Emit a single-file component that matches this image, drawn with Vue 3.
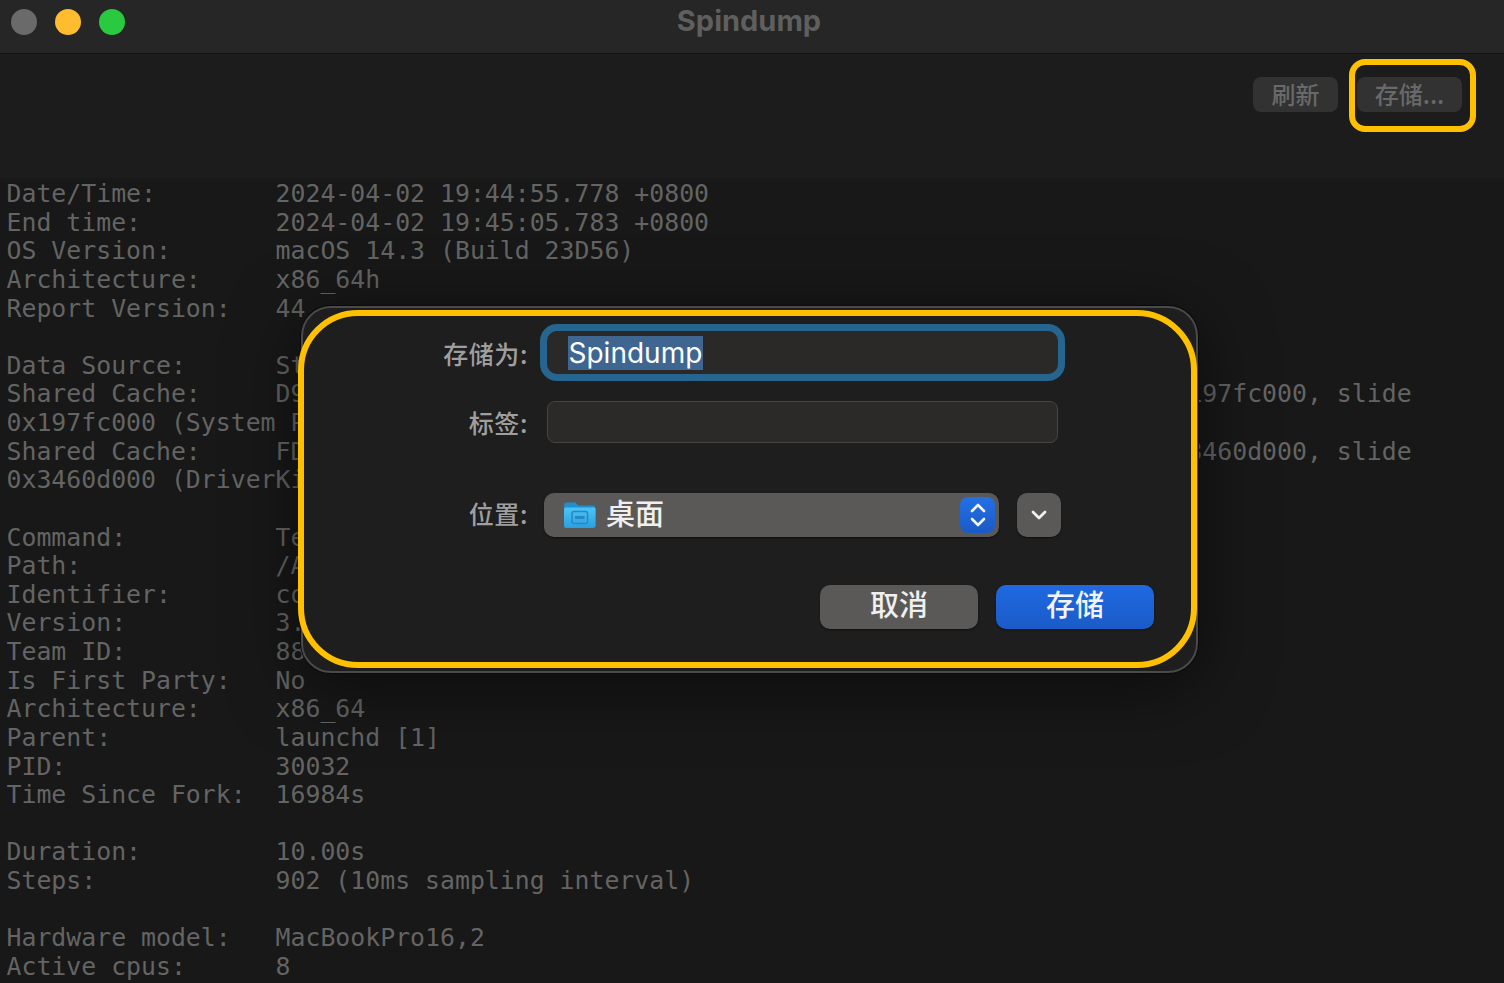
<script setup>
const log = `Date/Time:        2024-04-02 19:44:55.778 +0800
End time:         2024-04-02 19:45:05.783 +0800
OS Version:       macOS 14.3 (Build 23D56)
Architecture:     x86_64h
Report Version:   44

Data Source:      Stackshots
Shared Cache:     D9B5CCCE-E8C6-3D6F-9E4B-1B1E3B1E5C4A slide base address 0x7f8197fc000, slide
0x197fc000 (System Primary)
Shared Cache:     FD2A1C07-6B3E-3F19-A4D2-7C0E8B5D9A16 slide base address 0x7ff3460d000, slide
0x3460d000 (DriverKit)

Command:          Terminal
Path:             /Applications/Utilities/Terminal.app/Contents/MacOS/Terminal
Identifier:       com.apple.Terminal
Version:          3.14
Team ID:          88
Is First Party:   No
Architecture:     x86_64
Parent:           launchd [1]
PID:              30032
Time Since Fork:  16984s

Duration:         10.00s
Steps:            902 (10ms sampling interval)

Hardware model:   MacBookPro16,2
Active cpus:      8`
</script>

<template>
  <div class="window">
    <header class="titlebar">
      <div class="lights">
        <span class="light gray"></span>
        <span class="light yellow"></span>
        <span class="light green"></span>
      </div>
      <div class="title">Spindump</div>
    </header>

    <div class="toolbar">
      <button class="tool">刷新</button>
      <div class="save-wrap">
        <button class="tool save-tool">存储...</button>
        <span class="ring-small"></span>
      </div>
    </div>

    <pre class="log">{{ log }}</pre>

    <div class="dialog">
      <div class="form">
        <label class="label">存储为:</label>
        <div class="name-input"><span class="selected">Spindump</span></div>

        <label class="label tag-label">标签:</label>
        <div class="tag-input"></div>

        <label class="label place-label">位置:</label>
        <div class="location">
          <div class="select">
            <svg class="folder" width="33" height="30" viewBox="0 0 33 30">
              <defs>
                <linearGradient id="fg" x1="0" y1="0" x2="0" y2="1">
                  <stop offset="0" stop-color="#4cc4f5" />
                  <stop offset="1" stop-color="#2a9fe0" />
                </linearGradient>
              </defs>
              <path d="M1 5.500C1 3.500 2 2.500 4 2.500h7c1.200 0 2 .5 2.800 1.400L15.500 5.500H30c1.500 0 2.500 1 2.500 2.500v17.500c0 1.500-1 2.500-2.500 2.500H3.500C2 28 1 27 1 25.500z" fill="#1f8fd0" />
              <path d="M1 9.500C1 8 2 7.500 3.500 7.500H30c1.500 0 2.500.5 2.500 2v16c0 1.500-1 2.500-2.500 2.500H3.500C2 28 1 27 1 25.500z" fill="url(#fg)" />
              <rect x="9" y="11.500" width="15.500" height="12" rx="2" fill="none" stroke="#2a86c4" stroke-width="1.500" />
              <rect x="12" y="16" width="9.500" height="3" fill="#2a86c4" />
            </svg>
            <span class="place">桌面</span>
            <span class="stepper">
              <svg width="20" height="30" viewBox="0 0 20 30" fill="none" stroke="#f2f5fb" stroke-width="2.600" stroke-linecap="round" stroke-linejoin="round">
                <path d="M4 11l6-6 6 6" />
                <path d="M4 19l6 6 6-6" />
              </svg>
            </span>
          </div>
          <button class="expand">
            <svg width="18" height="12" viewBox="0 0 18 12" fill="none" stroke="#f0f0f0" stroke-width="2.800" stroke-linecap="round" stroke-linejoin="round">
              <path d="M3 3l6 6 6-6" />
            </svg>
          </button>
        </div>
      </div>
      <div class="actions">
        <button class="btn cancel">取消</button>
        <button class="btn primary">存储</button>
      </div>
    </div>
    <span class="ring-large"></span>
  </div>
</template>

<style scoped>
.window {
  position: relative;
  width: 1504px;
  height: 983px;
  overflow: hidden;
  background: #171817;
  font-family: "Noto Sans CJK SC", "Noto Sans", sans-serif;
}
.titlebar {
  position: relative;
  display: flex;
  align-items: center;
  justify-content: center;
  height: 54px;
  box-sizing: border-box;
  background: #252625;
  border-bottom: 1px solid #111;
}
.lights {
  position: absolute;
  left: 11px;
  top: 9px;
  display: flex;
  gap: 18px;
}
.light {
  width: 26px;
  height: 26px;
  border-radius: 50%;
}
.gray { background: #6a6a6a; }
.yellow { background: #febc2e; }
.green { background: #29c940; }
.title {
  font-family: Inter, "Noto Sans", sans-serif;
  font-weight: 700;
  font-size: 29px;
  line-height: 36px;
  margin: -12px 6px 0 0;
  color: #5f5f5f;
}
.toolbar {
  display: flex;
  justify-content: flex-end;
  align-items: flex-start;
  gap: 19px;
  height: 124px;
  box-sizing: border-box;
  padding: 23px 42px 0 0;
  background: #1c1c1c;
}
.tool {
  width: 85px;
  height: 35px;
  padding: 0 0 2px;
  border: 0;
  border-radius: 8px;
  background: #323232;
  color: #696969;
  font-family: inherit;
  font-weight: 500;
  font-size: 24px;
  line-height: 31px;
}
.save-wrap {
  position: relative;
}
.save-tool {
  display: block;
  width: 105px;
}
.ring-small {
  position: absolute;
  left: -8px;
  top: -18px;
  width: 127px;
  height: 73px;
  box-sizing: border-box;
  border: 6px solid #ffc000;
  border-radius: 16px;
}
.log {
  margin: 0;
  padding: 2px 0 0 6.5px;
  font-family: "DejaVu Sans Mono", "Liberation Mono", monospace;
  font-size: 24.83px;
  line-height: 28.63px;
  color: #646464;
  white-space: pre;
}
.dialog {
  position: absolute;
  left: 301px;
  top: 306px;
  width: 897px;
  height: 367px;
  box-sizing: border-box;
  padding: 23px 0 0;
  border: 2px solid #4a4a4a;
  border-radius: 30px;
  background: #1e1e1e;
  box-shadow: 0 0 0 1px #0a0a0a, 0 12px 70px rgba(0, 0, 0, 0.55);
}
.form {
  display: grid;
  grid-template-columns: 226px 1fr;
  grid-template-rows: 43px 69px 94px;
  column-gap: 18px;
}
.label {
  justify-self: end;
  align-self: center;
  margin-right: 1px;
  color: #a09f9f;
  font-weight: 500;
  font-size: 25px;
  line-height: 32px;
  letter-spacing: 0.6px;
}
.tag-label,
.tag-input {
  margin-top: 27px;
}
.place-label,
.location {
  margin-top: 50px;
}
.place-label {
  padding-bottom: 4px;
}
.name-input {
  display: flex;
  align-items: center;
  width: 511px;
  height: 43px;
  box-sizing: border-box;
  padding-left: 21px;
  background: #2a2928;
  border-radius: 10px;
  outline: 7px solid #25658f;
}
.selected {
  padding: 0 0.5px;
  background: #3e6691;
  color: #fff;
  font-family: Inter, "Noto Sans", sans-serif;
  font-size: 28px;
  line-height: 34px;
}
.tag-input {
  width: 511px;
  height: 42px;
  box-sizing: border-box;
  background: #2b2a29;
  border: 1px solid #454545;
  border-radius: 8px;
}
.location {
  display: flex;
  align-items: center;
  gap: 18px;
  margin-left: -3px;
}
.select {
  display: flex;
  align-items: center;
  width: 455px;
  height: 44px;
  box-sizing: border-box;
  padding: 0 4px 0 19px;
  background: #5a5958;
  border-radius: 10px;
  box-shadow: 0 1px 2px rgba(0, 0, 0, 0.5);
}
.folder {
  flex: none;
}
.place {
  margin: -7px 0 0 10px;
  flex: 1;
  color: #f0f0f0;
  font-weight: 500;
  font-size: 29px;
  line-height: 36px;
}
.stepper {
  display: flex;
  align-items: center;
  justify-content: center;
  width: 35px;
  height: 36px;
  border-radius: 8px;
  background: linear-gradient(#2470e6, #1a5ac6);
}
.expand {
  display: flex;
  align-items: center;
  justify-content: center;
  width: 44px;
  height: 44px;
  padding: 0;
  border: 0;
  border-radius: 10px;
  background: #5a5958;
  box-shadow: 0 1px 2px rgba(0, 0, 0, 0.5);
}
.actions {
  display: flex;
  justify-content: flex-end;
  gap: 18px;
  padding-right: 42px;
  margin-top: 48px;
}
.btn {
  width: 158px;
  height: 44px;
  padding: 0 0 8px;
  border: 0;
  border-radius: 10px;
  font-family: inherit;
  font-weight: 500;
  font-size: 29px;
  line-height: 36px;
  box-shadow: 0 1px 2px rgba(0, 0, 0, 0.5);
}
.cancel {
  background: #5a5958;
  color: #f0f0f0;
}
.primary {
  background: linear-gradient(#2069e2, #1a5bc8);
  color: #f2f5fb;
}
.ring-large {
  position: absolute;
  left: 298px;
  top: 310px;
  width: 899px;
  height: 358px;
  box-sizing: border-box;
  border: 6px solid #ffc000;
  border-radius: 60px;
}
</style>
